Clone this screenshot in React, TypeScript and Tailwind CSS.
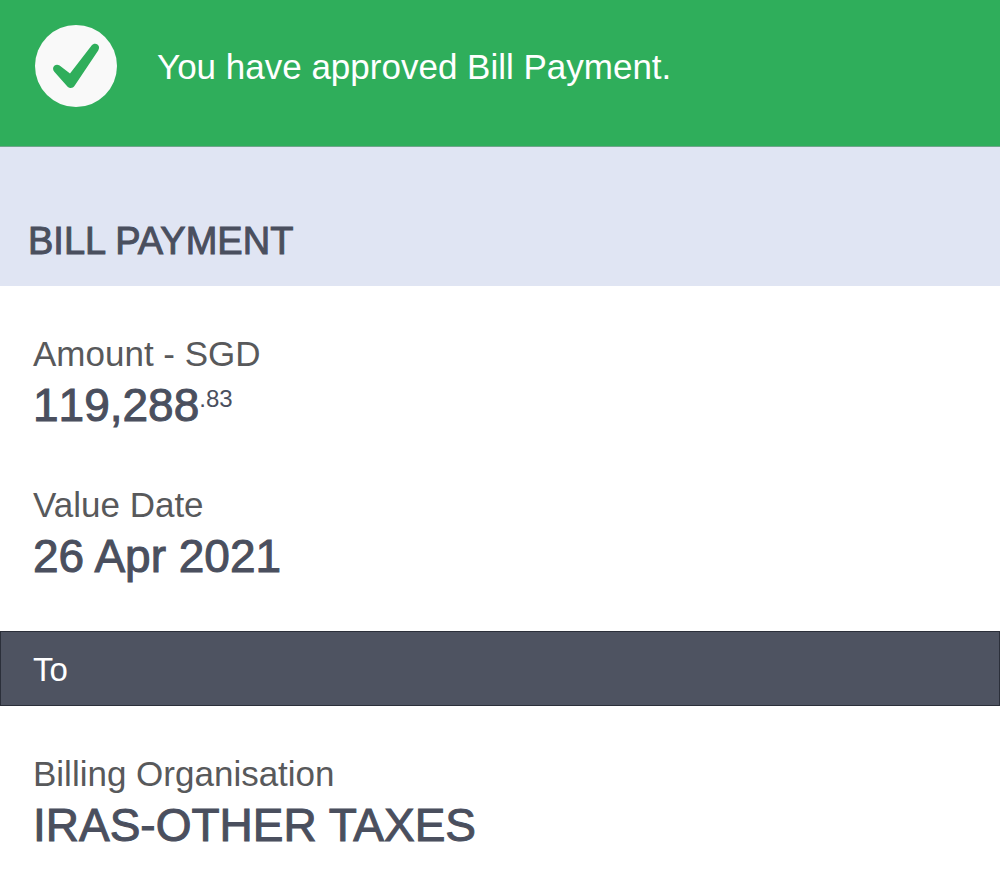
import clsx from 'clsx';

interface FieldProps {
  label: string;
  value: string;
  fraction?: string;
}

function Field({ label, value, fraction }: FieldProps) {
  return (
    <div>
      <dt className="text-[35px] leading-[48px] text-[#58595b]">{label}</dt>
      <dd
        className={clsx(
          'flex items-start text-[46px] leading-[55px] text-[#4a4f5e] [-webkit-text-stroke:1px_#4a4f5e]',
          // keep digits of an amount evenly spaced
          fraction && '[font-kerning:none]',
        )}
      >
        {value}
        {fraction && (
          <span className="text-[24px] leading-[42px] [-webkit-text-stroke:0px]">{fraction}</span>
        )}
      </dd>
    </div>
  );
}

export default function App() {
  return (
    <main className="min-h-screen bg-white font-['Liberation_Sans',Arial,sans-serif]">
      <div
        role="status"
        className="flex items-start gap-10 border-b border-[#6fa58c] bg-[#2fae5b] px-[35px] pt-[25px] pb-[37px]"
      >
        <svg viewBox="0 0 82 82" className="size-[82px] shrink-0" aria-hidden="true">
          <circle cx="41" cy="41" r="41" fill="#f9f9f9" />
          <path
            d="M24.6 40.6L35 48.4L56.6 20.6C58.2 18.4 61 18.2 62.8 19.8C64.4 21.2 64.5 23.4 63.2 25.4L39.6 60.8C37.9 63.4 34.6 63.7 32.4 61.5L19.3 46.8C17.6 44.8 17.7 42.3 19.3 40.8C20.8 39.4 22.8 39.2 24.6 40.6Z"
            fill="#2fae5b"
          />
        </svg>
        <p className="text-[35px] leading-[84px] text-white">You have approved Bill Payment.</p>
      </div>

      <header className="bg-[#e0e5f3] px-7 pt-[70px] pb-[21px]">
        <h1 className="text-[38px] leading-[48px] text-[#4a4f5e] [-webkit-text-stroke:1px_#4a4f5e]">BILL PAYMENT</h1>
      </header>

      <dl className="flex flex-col gap-12 px-[33px] pt-11 pb-[47px]">
        <Field label="Amount - SGD" value="119,288" fraction=".83" />
        <Field label="Value Date" value="26 Apr 2021" />
      </dl>

      <h2 className="border border-[#2b2f3a] bg-[#4e5361] px-8 pt-[13px] pb-[10px] text-[33px] leading-[50px] text-white">To</h2>

      <dl className="px-[33px] pt-11 pb-9">
        <Field label="Billing Organisation" value="IRAS-OTHER TAXES" />
      </dl>
    </main>
  );
}
